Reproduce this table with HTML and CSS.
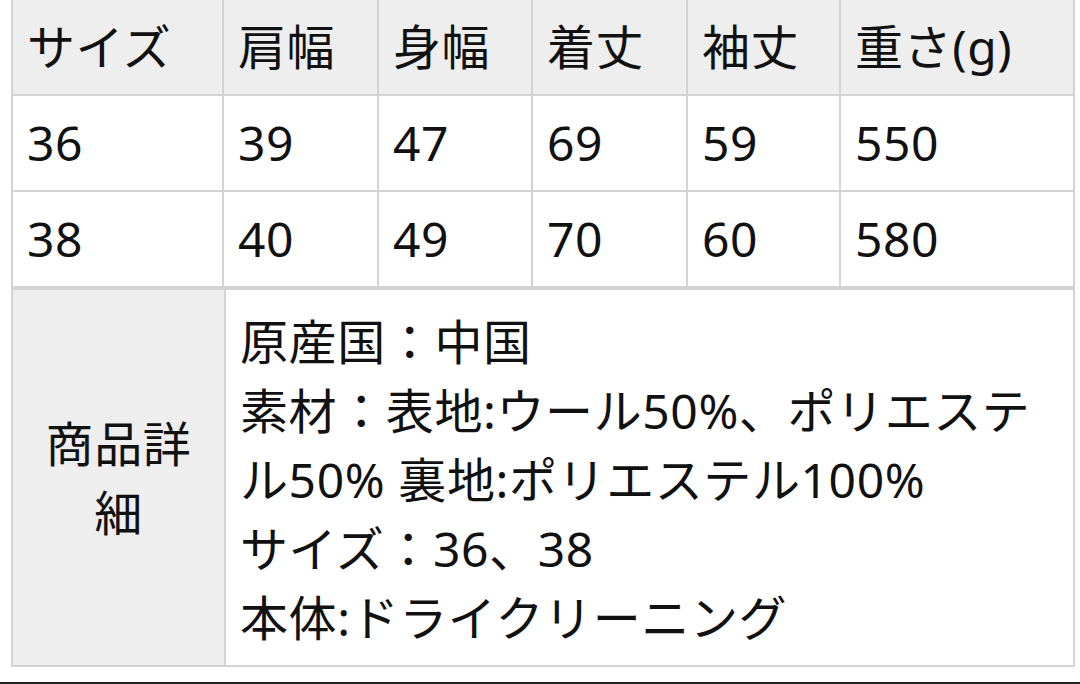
FILE: index.html
```html
<!DOCTYPE html>
<html lang="ja">
<head>
<meta charset="utf-8">
<link rel="stylesheet" href="styles.css">
</head>
<body>
<div class="page">
  <table class="size-table">
    <colgroup>
      <col class="c1"><col class="c2"><col class="c3"><col class="c4"><col class="c5"><col class="c6">
    </colgroup>
    <tr class="head">
      <th>サイズ</th><th>肩幅</th><th>身幅</th><th>着丈</th><th>袖丈</th><th>重さ(g)</th>
    </tr>
    <tr>
      <td>36</td><td>39</td><td>47</td><td>69</td><td>59</td><td>550</td>
    </tr>
    <tr>
      <td>38</td><td>40</td><td>49</td><td>70</td><td>60</td><td>580</td>
    </tr>
  </table>
  <table class="detail-table">
    <colgroup><col class="d1"><col class="d2"></colgroup>
    <tr>
      <th class="label">商品詳<br>細</th>
      <td class="content">原産国：中国<br>素材：表地:ウール50%、ポリエステル50% 裏地:ポリエステル100%<br>サイズ：36、38<br>本体:ドライクリーニング</td>
    </tr>
  </table>
</div>
<div class="bottom-bar"></div>
</body>
</html>
```
FILE: styles.css
```css
html, body {
  margin: 0;
  padding: 0;
  background: #ffffff;
}
body {
  width: 1080px;
  height: 684px;
  overflow: hidden;
  font-family: "Noto Sans", "Noto Sans CJK JP", sans-serif;
  color: #111111;
}
.page {
  padding: 0 7px 15px 11px;
}
table {
  border-collapse: collapse;
  table-layout: fixed;
  width: 1062px;
  font-size: 48px;
  font-weight: 400;
  letter-spacing: 0.6px;
}
.size-table {
  margin-top: -2px;
}
.size-table th,
.size-table td {
  border: 2px solid #d3d3d3;
  padding: 13px 8px 13px 14px;
  line-height: 68px;
  height: 68px;
  text-align: left;
  vertical-align: middle;
  font-weight: 400;
  white-space: nowrap;
}
.size-table .head th {
  background: #eeeeee;
}
.c1 { width: 211px; }
.c2 { width: 155px; }
.c3 { width: 154px; }
.c4 { width: 155px; }
.c5 { width: 153px; }
.c6 { width: 234px; }
.d1 { width: 213px; }
.d2 { width: 849px; }
.detail-table th,
.detail-table td {
  border: 2px solid #d3d3d3;
  line-height: 69px;
  font-weight: 400;
}
.detail-table .label {
  background: #eeeeee;
  text-align: center;
  vertical-align: middle;
  padding: 0 10px;
}
.detail-table .content {
  text-align: left;
  vertical-align: top;
  padding: 17px 8px 13px 14px;
}
.bottom-bar {
  border-top: 2px solid #222222;
}
```
